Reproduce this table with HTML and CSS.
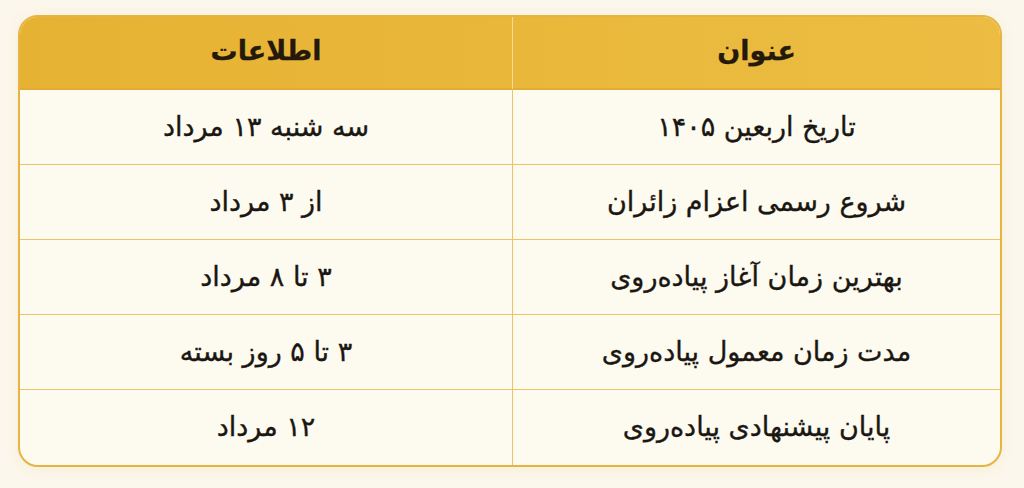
FILE: index.html
```html
<!DOCTYPE html>
<html lang="fa" dir="rtl">
<head>
<meta charset="utf-8">
<link rel="stylesheet" href="styles.css">
</head>
<body>
<div class="page">
  <div class="table">
    <div class="cell head head-right">عنوان</div>
    <div class="cell head head-left">اطلاعات</div>
    <div class="cell">تاریخ اربعین ۱۴۰۵</div>
    <div class="cell">سه شنبه ۱۳ مرداد</div>
    <div class="cell">شروع رسمی اعزام زائران</div>
    <div class="cell">از ۳ مرداد</div>
    <div class="cell">بهترین زمان آغاز پیاده‌روی</div>
    <div class="cell">۳ تا ۸ مرداد</div>
    <div class="cell">مدت زمان معمول پیاده‌روی</div>
    <div class="cell">۳ تا ۵ روز بسته</div>
    <div class="cell last">پایان پیشنهادی پیاده‌روی</div>
    <div class="cell last">۱۲ مرداد</div>
  </div>
</div>
</body>
</html>
```
FILE: styles.css
```css
html, body {
  margin: 0;
  padding: 0;
  background: #fbf7ec;
}
.page {
  width: 1024px;
  height: 488px;
  padding: 15px 22px 21px 18px;
  box-sizing: border-box;
}
.table {
  height: 452px;
  box-sizing: border-box;
  border: 2px solid #e6b441;
  border-radius: 20px;
  overflow: hidden;
  display: grid;
  grid-template-columns: 488px 1fr;
  grid-template-rows: 73px repeat(5, 1fr);
  background: #fdfaf0;
  box-shadow: 0 2px 14px rgba(210, 170, 70, 0.12);
  font-family: "DejaVu Sans", sans-serif;
  color: #1a1712;
}
.cell {
  display: flex;
  align-items: center;
  justify-content: center;
  font-size: 27px;
  -webkit-text-stroke: 0.35px #1a1712;
  border-bottom: 1.5px solid #ebc463;
  padding-bottom: 2px;
}
.cell:nth-child(odd) {
  border-left: 1.5px solid #ebc463;
}
.cell.last {
  border-bottom: none;
}
.head {
  font-weight: bold;
  font-size: 27px;
  color: #24190b;
  -webkit-text-stroke: 0.3px #24190b;
  border-bottom: 2px solid #e3ab33;
  padding-bottom: 4px;
}
.head-left {
  background: linear-gradient(90deg, #e6b234, #e9b73a);
}
.head-right {
  background: linear-gradient(90deg, #e9b83b, #ecbd42);
}
.head:nth-child(odd) {
  border-left: 1.5px solid #f6dc96;
}
```
